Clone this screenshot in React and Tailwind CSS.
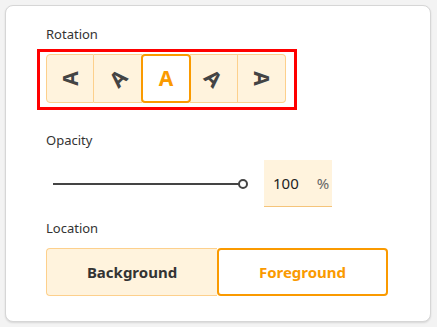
import React from "react";

export default function App() {
  const rots = ["-rotate-90", "-rotate-45", "", "rotate-45", "rotate-90"];
  return (
    <div className="w-[437px] h-[327px] bg-[#f3f3f3] pt-[5px] pl-[5px]" style={{ fontFamily: '"Noto Sans", "Open Sans", sans-serif' }}>
      <div className="w-[426px] h-[317px] bg-white border border-[#d6d6d6] rounded-[8px] shadow-[0_1px_2px_rgba(0,0,0,0.12)] pl-[40px] pt-[18px]">
        <div className="text-[13px] leading-[20px] text-[#333]">Rotation</div>
        <div className="relative mt-[10px] w-[242px]">
          <div className="flex h-[49px]">
            {rots.map((r, i) => {
              const sel = i === 2;
              if (sel) {
                return (
                  <div key={i} className="w-[50px] h-[49px] -mx-px z-10 bg-white border-2 border-[#fa9a00] rounded-[4px] flex items-center justify-center">
                    <span className="text-[21px] font-bold text-[#fa9a00] leading-none">A</span>
                  </div>
                );
              }
              return (
                <div
                  key={i}
                  className={
                    "w-[48px] h-[49px] bg-[#fff3dd] border-y border-[#fdd08c] flex items-center justify-center " +
                    (i === 0 ? "border-l rounded-l-[4px] border-r " : "") +
                    (i === 4 ? "border-r rounded-r-[4px] " : "") +
                    (i === 3 ? "border-r " : "")
                  }
                >
                  <span className={"inline-block text-[21px] font-bold text-[#444] leading-none " + r}>A</span>
                </div>
              );
            })}
          </div>
          <div className="absolute left-[-9px] top-[-5px] w-[260px] h-[61px] border-[3px] border-[#ff0000] pointer-events-none" />
        </div>

        <div className="mt-[27px] text-[13px] leading-[20px] text-[#333]">Opacity</div>
        <div className="mt-[10px] flex items-center h-[47px]">
          <div className="ml-[7px] w-[186px] h-[2px] bg-[#444]" />
          <div className="w-[10px] h-[10px] rounded-full border-2 border-[#444] bg-white -ml-[1px]" />
          <div className="ml-[16px] w-[68px] h-[47px] bg-[#fff3dd] border-b border-[#f5c47a] flex items-center pl-[9px]">
            <span className="text-[15px] text-[#222]">100</span>
            <span className="ml-[18px] text-[15px] text-[#666]">%</span>
          </div>
        </div>

        <div className="mt-[11px] text-[13px] leading-[20px] text-[#333]">Location</div>
        <div className="mt-[10px] flex w-[342px] h-[48px]">
          <div className="w-[171px] h-[48px] bg-[#fff3dd] border border-r-0 border-[#fdd08c] rounded-l-[4px] flex items-center justify-center text-[15px] font-bold text-[#333]">
            Background
          </div>
          <div className="w-[171px] h-[48px] bg-white border-2 border-[#fa9a00] rounded-[4px] flex items-center justify-center text-[15px] font-bold text-[#fa9a00]">
            Foreground
          </div>
        </div>
      </div>
    </div>
  );
}
